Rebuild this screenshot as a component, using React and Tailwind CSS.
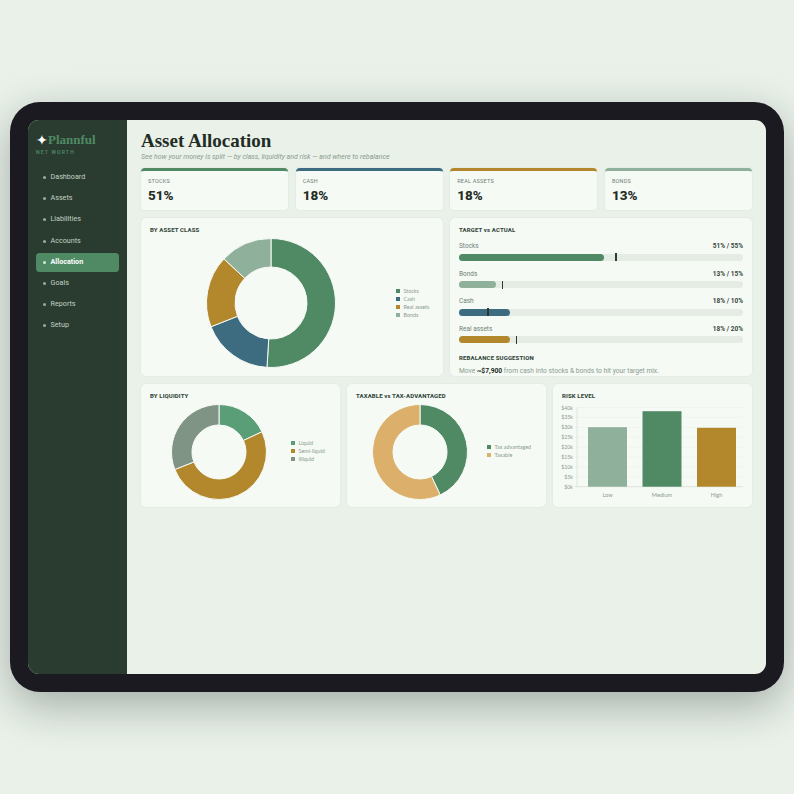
const nav = ["Dashboard", "Assets", "Liabilities", "Accounts", "Allocation", "Goals", "Reports", "Setup"];

const stats = [
  { label: "Stocks", value: "51%", bar: "border-t-[#4f8a65]" },
  { label: "Cash", value: "18%", bar: "border-t-[#3d6b80]" },
  { label: "Real assets", value: "18%", bar: "border-t-[#b3882c]" },
  { label: "Bonds", value: "13%", bar: "border-t-[#8fb09a]" },
];

const targets = [
  { label: "Stocks", actual: 51, target: 55, fill: "bg-[#4f8a65]" },
  { label: "Bonds", actual: 13, target: 15, fill: "bg-[#8fb09a]" },
  { label: "Cash", actual: 18, target: 10, fill: "bg-[#3d6b80]" },
  { label: "Real assets", actual: 18, target: 20, fill: "bg-[#b3882c]" },
];

const assetClass = [
  { label: "Stocks", value: 51, color: "#4f8a65", swatch: "bg-[#4f8a65]" },
  { label: "Cash", value: 18, color: "#3d6b80", swatch: "bg-[#3d6b80]" },
  { label: "Real assets", value: 18, color: "#b3882c", swatch: "bg-[#b3882c]" },
  { label: "Bonds", value: 13, color: "#8fb09a", swatch: "bg-[#8fb09a]" },
];

const liquidity = [
  { label: "Liquid", value: 18, color: "#5a9e78", swatch: "bg-[#5a9e78]" },
  { label: "Semi-liquid", value: 51, color: "#b3882c", swatch: "bg-[#b3882c]" },
  { label: "Illiquid", value: 31, color: "#7f9485", swatch: "bg-[#7f9485]" },
];

const tax = [
  { label: "Tax advantaged", value: 43, color: "#4f8a65", swatch: "bg-[#4f8a65]" },
  { label: "Taxable", value: 57, color: "#dcb06a", swatch: "bg-[#dcb06a]" },
];

const ticks = ["$40k", "$35k", "$30k", "$25k", "$20k", "$15k", "$10k", "$5k", "$0k"];

const risk = [
  { label: "Low", x: 5, top: 19.7, color: "#8fb09a" },
  { label: "Medium", x: 59.5, top: 3.7, color: "#4f8a65" },
  { label: "High", x: 114, top: 20.3, color: "#b3882c" },
];

function slicePath(cx, cy, r, inner, from, to) {
  const pt = (rad, pct) => {
    const a = (pct / 100) * Math.PI * 2 - Math.PI / 2;
    return `${cx + rad * Math.cos(a)} ${cy + rad * Math.sin(a)}`;
  };
  const large = to - from > 50 ? 1 : 0;
  return `M${pt(r, from)} A${r} ${r} 0 ${large} 1 ${pt(r, to)} L${pt(inner, to)} A${inner} ${inner} 0 ${large} 0 ${pt(inner, from)} Z`;
}

function Donut({ data, size, hole }) {
  const c = size / 2;
  let at = 0;
  return (
    <svg width={size} height={size} viewBox={`0 0 ${size} ${size}`} className="shrink-0">
      {data.map((d) => {
        const path = slicePath(c, c, c - 0.5, hole, at, at + d.value);
        at += d.value;
        return <path key={d.label} d={path} fill={d.color} stroke="#f6faf5" strokeWidth="1" />;
      })}
    </svg>
  );
}

function Legend({ data, className = "" }) {
  return (
    <div className={`flex flex-col gap-[1.5px] font-['Lato',sans-serif] text-[5.4px] leading-[6.5px] text-[#8b9a90] ${className}`}>
      {data.map((d) => (
        <div key={d.label} className="flex items-center gap-[3.5px]">
          <span className={`w-[4px] h-[4px] ${d.swatch}`} />
          {d.label}
        </div>
      ))}
    </div>
  );
}

function Card({ title, className, children }) {
  return (
    <div className={`bg-[#f6faf5] rounded-[5px] shadow-[0_0_2px_rgba(40,70,50,0.08)] overflow-hidden ${className}`}>
      <h3 className="text-[6px] leading-[9px] font-extrabold tracking-[0.02em] text-[#34483b]">{title}</h3>
      {children}
    </div>
  );
}

function RiskChart() {
  return (
    <svg width="190" height="100" viewBox="0 0 190 100" className="block mt-[5px] ml-[-2px]">
      {ticks.map((t, i) => (
        <g key={t}>
          <line x1="15" x2="183" y1={2.5 + i * 9.9} y2={2.5 + i * 9.9} stroke={i === 8 ? "#d5ddd6" : "#edf2ec"} strokeWidth="0.75" />
          <text x="13" y={4.5 + i * 9.9} textAnchor="end" fontSize="5.2" fill="#8b9a90" fontFamily="Lato, sans-serif">{t}</text>
        </g>
      ))}
      <line x1="17" x2="17" y1="2.5" y2="81.7" stroke="#d5ddd6" strokeWidth="0.75" />
      {risk.map((b) => (
        <g key={b.label}>
          <rect x={b.x + 23} y={b.top + 2.5} width="39" height={79.2 - b.top} fill={b.color} />
          <text x={b.x + 42.5} y="91.5" textAnchor="middle" fontSize="5.6" fill="#8b9a90" fontFamily="Lato, sans-serif">{b.label}</text>
        </g>
      ))}
    </svg>
  );
}

export default function App() {
  return (
    <div className="h-[794px] bg-[#e9f1e9] flex items-center justify-center font-['Roboto',sans-serif] overflow-hidden">
      <div className="w-[774px] h-[590px] p-[18px] bg-[#1a1a20] rounded-[30px] shadow-[0_14px_44px_rgba(20,30,25,0.32)]">
        <div className="h-full flex rounded-[11px] overflow-hidden bg-[#e9f1e9]">
          {/* Sidebar */}
          <aside className="w-[99px] shrink-0 bg-[#2a3c2f] pt-[12px] px-[8px]">
            <div className="flex items-center gap-[2px] h-[16px] font-['Liberation_Serif',serif] text-[13px] font-bold text-[#4f8a65]">
              <span className="text-white text-[14px] w-[10px] font-['DejaVu_Sans',sans-serif] leading-none">✦</span>
              Plannful
            </div>
            <div className="mt-[1px] text-[5px] leading-[7px] font-semibold tracking-[0.24em] text-[#4f8a65]">NET WORTH</div>
            <nav className="mt-[12px] flex flex-col gap-[2.2px]">
              {nav.map((item) => (
                <div
                  key={item}
                  className={`h-[19px] flex items-center gap-[5px] pl-[6.5px] rounded-[3.5px] text-[7.2px] ${
                    item === "Allocation" ? "bg-[#4f8a65] text-white font-bold" : "text-[#c3d0c6]"
                  }`}
                >
                  <span className={`w-[3px] h-[3px] rounded-full ${item === "Allocation" ? "bg-[#d5e6da]" : "bg-[#8fb09a]"}`} />
                  {item}
                </div>
              ))}
            </nav>
          </aside>

          {/* Main */}
          <main className="flex-1 px-[14px] pt-[10px]">
            <h1 className="font-['Liberation_Serif',serif] text-[19px] leading-[22px] font-bold text-[#1f2d25]">Asset Allocation</h1>
            <p className="text-[7px] leading-[10px] italic text-[#8b9a90]">
              See how your money is split — by class, liquidity and risk — and where to rebalance
            </p>

            <div className="mt-[6px] grid grid-cols-4 gap-[7.5px]">
              {stats.map((s) => (
                <div key={s.label} className={`h-[42px] bg-[#f6faf5] rounded-[4px] border-t-[3px] ${s.bar} px-[7px] pt-[6px] shadow-[0_0_2px_rgba(40,70,50,0.08)]`}>
                  <div className="text-[5.5px] leading-[8px] uppercase tracking-[0.04em] text-[#6f8175]">{s.label}</div>
                  <div className="text-[13.5px] leading-[20px] font-extrabold text-[#1f2d25]">{s.value}</div>
                </div>
              ))}
            </div>

            <div className="mt-[8px] grid grid-cols-2 gap-[7px]">
              <Card title="BY ASSET CLASS" className="h-[158px] p-[9px] pt-[7px]">
                <div className="mt-[4px] flex items-center pl-[56px] gap-[60px]">
                  <Donut data={assetClass} size={130} hole={36} />
                  <Legend data={assetClass} />
                </div>
              </Card>

              <Card title="TARGET vs ACTUAL" className="h-[158px] px-[9px] pt-[7px]">
                <div className="mt-[8px] flex flex-col gap-[9px]">
                  {targets.map((t) => (
                    <div key={t.label}>
                      <div className="flex justify-between text-[6.5px] leading-[9px] mb-[2.5px]">
                        <span className="text-[#6f8175]">{t.label}</span>
                        <span className="font-bold text-[#34483b]">{t.actual}% / {t.target}%</span>
                      </div>
                      <div className="relative h-[7px] rounded-full bg-[#e4ece4]">
                        <div className={`h-full rounded-full ${t.fill}`} style={{ width: `${t.actual}%` }} />
                        <div className="absolute top-[-0.5px] w-[1.5px] h-[8px] bg-[#2a3c2f]" style={{ left: `${t.target}%` }} />
                      </div>
                    </div>
                  ))}
                </div>
                <h4 className="mt-[10px] text-[6px] leading-[9px] font-extrabold tracking-[0.02em] text-[#34483b]">REBALANCE SUGGESTION</h4>
                <p className="mt-[3.5px] text-[6.7px] leading-[10px] text-[#8b9a90]">
                  Move <b className="text-[#1f2d25]">~$7,900</b> from cash into stocks &amp; bonds to hit your target mix.
                </p>
              </Card>
            </div>

            <div className="mt-[8px] grid grid-cols-3 gap-[7px]">
              <Card title="BY LIQUIDITY" className="h-[123px] p-[9px] pt-[7px]">
                <div className="mt-[4px] flex items-center pl-[21px] gap-[24px]">
                  <Donut data={liquidity} size={96} hole={27} />
                  <Legend data={liquidity} className="mb-[2px]" />
                </div>
              </Card>
              <Card title="TAXABLE vs TAX-ADVANTAGED" className="h-[123px] p-[9px] pt-[7px]">
                <div className="mt-[4px] flex items-center pl-[16px] gap-[19px]">
                  <Donut data={tax} size={96} hole={27} />
                  <Legend data={tax} className="mb-[2px]" />
                </div>
              </Card>
              <Card title="RISK LEVEL" className="h-[123px] p-[9px] pt-[7px]">
                <RiskChart />
              </Card>
            </div>
          </main>
        </div>
      </div>
    </div>
  );
}
